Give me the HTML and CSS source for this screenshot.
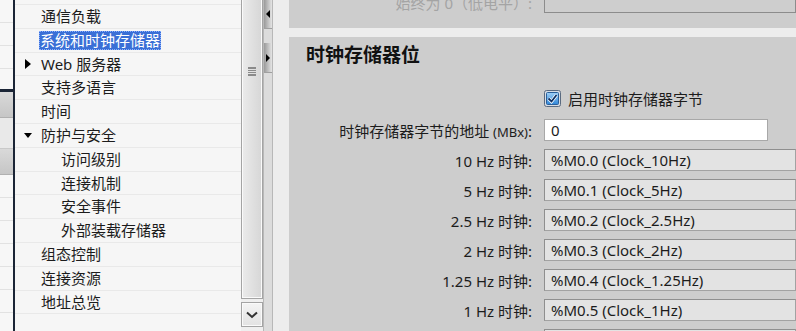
FILE: index.html
```html
<!DOCTYPE html>
<html lang="zh-CN">
<head>
    <meta charset="UTF-8">
    <title>系统和时钟存储器</title>
    <link rel="stylesheet" href="styles.css">
</head>
<body>
<div class="app">

    <div class="dock">
        <div class="dock-row"></div>
        <div class="dock-row"></div>
        <div class="dock-row"></div>
        <div class="dock-row dock-last"></div>
        <div class="dock-band"></div>
        <div class="dock-mid"></div>
        <div class="dock-band"></div>
        <div class="dock-row"></div>
        <div class="dock-row"></div>
        <div class="dock-row"></div>
        <div class="dock-row"></div>
        <div class="dock-row"></div>
        <div class="dock-row"></div>
    </div>

    <div class="tree">
        <ul class="tree-list">
            <li class="node">循环</li>
            <li class="node">通信负载</li>
            <li class="node"><span class="selected">系统和时钟存储器</span></li>
            <li class="node"><span class="arrow arrow-right"></span>Web 服务器</li>
            <li class="node">支持多语言</li>
            <li class="node">时间</li>
            <li class="node"><span class="arrow arrow-down"></span>防护与安全</li>
            <li class="node sub">访问级别</li>
            <li class="node sub">连接机制</li>
            <li class="node sub">安全事件</li>
            <li class="node sub">外部装载存储器</li>
            <li class="node">组态控制</li>
            <li class="node">连接资源</li>
            <li class="node">地址总览</li>
            <li class="node"></li>
        </ul>
    </div>

    <div class="vscroll">
        <div class="vscroll-thumb"><span class="grip"></span></div>
        <div class="vscroll-btn">
            <svg width="12" height="8" viewBox="0 0 12 8"><path d="M1 1.5 L6 6 L11 1.5" fill="none" stroke="#333" stroke-width="2"/></svg>
        </div>
    </div>

    <div class="splitter">
        <div class="split-btn">
            <svg width="6" height="8" viewBox="0 0 6 8"><path d="M5 0 L1 4 L5 8 Z" fill="#000"/></svg>
        </div>
        <div class="split-btn split-btn-second">
            <svg width="6" height="8" viewBox="0 0 6 8"><path d="M1 0 L5 4 L1 8 Z" fill="#000"/></svg>
        </div>
    </div>

    <div class="content">
        <section class="group group-top">
            <div class="row row-top">
                <div class="row-label faded">始终为 0（低电平）:</div>
                <div class="box box-flat"></div>
            </div>
        </section>

        <section class="group">
            <h2 class="group-title">时钟存储器位</h2>

            <div class="check-row">
                <svg class="checkbox" width="17" height="17" viewBox="0 0 17 17">
                    <defs>
                        <linearGradient id="cbfill" x1="0" y1="0" x2="0" y2="1">
                            <stop offset="0" stop-color="#9fd0f7"/>
                            <stop offset="1" stop-color="#2f86d8"/>
                        </linearGradient>
                    </defs>
                    <rect x="0.5" y="0.5" width="16" height="16" rx="2" fill="#d8dde4" stroke="#5a6a80"/>
                    <rect x="2.5" y="2.5" width="12" height="12" rx="1" fill="url(#cbfill)" stroke="#2a5f9a"/>
                    <path d="M4.5 8.5 L7.5 11.5 L12.5 5" fill="none" stroke="#fff" stroke-width="3.2"/>
                    <path d="M4.5 8.5 L7.5 11.5 L12.5 5" fill="none" stroke="#0d2f63" stroke-width="1.8"/>
                </svg>
                <span class="check-label">启用时钟存储器字节</span>
            </div>

            <div class="row">
                <div class="row-label">时钟存储器字节的地址 <span class="small">(MBx)</span>:</div>
                <div class="box box-edit">0</div>
            </div>
            <div class="row">
                <div class="row-label">10 Hz 时钟:</div>
                <div class="box box-ro">%M0.0 (Clock_10Hz)</div>
            </div>
            <div class="row">
                <div class="row-label">5 Hz 时钟:</div>
                <div class="box box-ro">%M0.1 (Clock_5Hz)</div>
            </div>
            <div class="row">
                <div class="row-label">2.5 Hz 时钟:</div>
                <div class="box box-ro">%M0.2 (Clock_2.5Hz)</div>
            </div>
            <div class="row">
                <div class="row-label">2 Hz 时钟:</div>
                <div class="box box-ro">%M0.3 (Clock_2Hz)</div>
            </div>
            <div class="row">
                <div class="row-label">1.25 Hz 时钟:</div>
                <div class="box box-ro">%M0.4 (Clock_1.25Hz)</div>
            </div>
            <div class="row">
                <div class="row-label">1 Hz 时钟:</div>
                <div class="box box-ro">%M0.5 (Clock_1Hz)</div>
            </div>
            <div class="row">
                <div class="row-label">0.625 Hz 时钟:</div>
                <div class="box box-ro">%M0.6 (Clock_0.625Hz)</div>
            </div>
        </section>
    </div>

</div>
</body>
</html>
```

FILE: styles.css
```css
body {
    margin: 0;
    padding: 0;
    width: 796px;
    height: 331px;
    overflow: hidden;
    font-family: "Noto Sans", "Noto Sans CJK SC", sans-serif;
    font-size: 15px;
    color: #1c1c1c;
}

.app {
    display: flex;
    height: 331px;
    overflow: hidden;
}

/* left dock strip */
.dock {
    width: 13px;
    flex-shrink: 0;
    border-right: 2px solid #1b2536;
    background-color: #f7f7f7;
    display: flex;
    flex-direction: column;
}

.dock-row {
    height: 22px;
    border-bottom: 1px solid #e2e2e2;
    flex-shrink: 0;
}

.dock-last {
    height: 20px;
    border-bottom: 3px solid #1b2536;
}

.dock-band {
    height: 25px;
    background: linear-gradient(#d9d9d9, #c6c6c6);
    border-bottom: 1px solid #b0b0b0;
    flex-shrink: 0;
}

.dock-mid {
    height: 30px;
    background-color: #e9e9e9;
    border-bottom: 1px solid #c9c9c9;
    flex-shrink: 0;
}

/* project tree */
.tree {
    width: 226px;
    flex-shrink: 0;
    background-color: #f6f6f6;
    overflow: hidden;
}

.tree-list {
    list-style: none;
    margin: -18.8px 0 0 0;
    padding: 0;
}

.node {
    position: relative;
    height: 22.8px;
    line-height: 22.8px;
    border-bottom: 1px solid #e9e9e9;
    padding-left: 26px;
    white-space: nowrap;
}

.node.sub {
    padding-left: 46px;
}

.selected {
    display: inline-block;
    margin-left: -2px;
    padding: 0 1px;
    line-height: 19px;
    background-color: #3a6fd6;
    color: #fff;
    outline: 1px dotted #8ab0ff;
    outline-offset: -1px;
}

.arrow {
    position: absolute;
    width: 0;
    height: 0;
}

.arrow-right {
    left: 10px;
    top: 6px;
    border-top: 5px solid transparent;
    border-bottom: 5px solid transparent;
    border-left: 6px solid #000;
}

.arrow-down {
    left: 9px;
    top: 9px;
    border-left: 4px solid transparent;
    border-right: 4px solid transparent;
    border-top: 5px solid #000;
}

/* vertical scrollbar */
.vscroll {
    width: 22px;
    flex-shrink: 0;
    background-color: #efefef;
    display: flex;
    flex-direction: column;
}

.vscroll-thumb {
    height: 303px;
    margin-top: -4px;
    border: 1px solid #a4a4a4;
    box-shadow: inset 0 0 0 1px #fafafa;
    background: linear-gradient(to right, #ebebeb, #d6d6d6);
    display: flex;
    justify-content: center;
    padding-top: 70px;
    box-sizing: border-box;
}

.grip {
    width: 8px;
    height: 7px;
    border-top: 1px solid #8a8a8a;
    border-bottom: 1px solid #8a8a8a;
    background: repeating-linear-gradient(#8a8a8a 0 1px, transparent 1px 2px);
}

.vscroll-btn {
    height: 23px;
    margin-top: 3px;
    border: 1px solid #a4a4a4;
    box-shadow: inset 0 0 0 1px #fafafa;
    background: linear-gradient(#f4f4f4, #e2e2e2);
    display: flex;
    align-items: center;
    justify-content: center;
}

/* pane splitter */
.splitter {
    width: 8px;
    flex-shrink: 0;
    border-left: 1px solid #b8b8b8;
    border-right: 1px solid #b8b8b8;
    background-color: #dcdcdc;
    display: flex;
    flex-direction: column;
}

.split-btn {
    height: 28px;
    background: linear-gradient(to right, #9a9a9a, #e4e4e4);
    border-bottom: 1px solid #a0a0a0;
    display: flex;
    align-items: center;
    justify-content: center;
}

.split-btn-second {
    margin-top: 14px;
    height: 29px;
}

/* properties area */
.content {
    flex: 1;
    background-color: #ededed;
    padding-left: 16px;
    overflow: hidden;
}

.group {
    background-color: #cdcdcd;
    height: 400px;
}

.group-top {
    height: 28px;
    margin-bottom: 9px;
    overflow: hidden;
}

.group-title {
    margin: 0;
    padding: 6px 0 0 17px;
    height: 24px;
    line-height: 24px;
    font-size: 19px;
    font-weight: bold;
    color: #111;
}

.check-row {
    display: flex;
    align-items: center;
    height: 22px;
    margin: 20px 0 10px 255px;
    gap: 7px;
}

.row {
    display: flex;
    align-items: center;
    height: 22px;
    margin-bottom: 8px;
    gap: 12px;
}

.row-top {
    margin-top: -9px;
}

.row-label {
    width: 243px;
    flex-shrink: 0;
    text-align: right;
    white-space: nowrap;
}

.faded {
    color: #a4a4a4;
}

.small {
    font-size: 13px;
}

.box {
    height: 22px;
    box-sizing: border-box;
    line-height: 20px;
    padding-left: 6px;
    white-space: nowrap;
    border: 1px solid #a2a2a2;
}

.box-flat {
    width: 270px;
    background-color: #cecece;
    border-color: #8c8c8c;
}

.box-edit {
    width: 224px;
    background-color: #fff;
    border-color: #a8a8a8;
}

.box-ro {
    width: 270px;
    background-color: #e3e3e3;
    border-top-color: #8f8f8f;
    border-left-color: #8f8f8f;
}
```
